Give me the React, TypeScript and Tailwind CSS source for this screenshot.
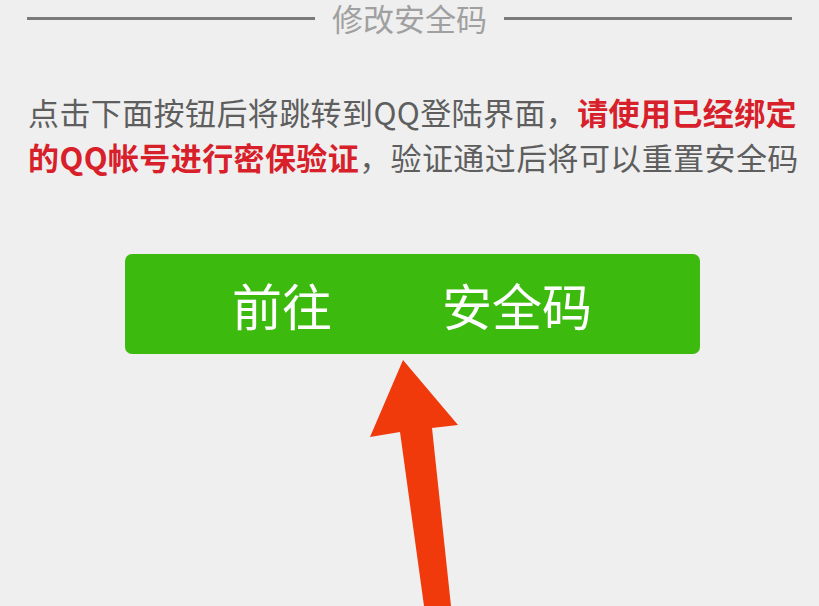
import React from "react";

const font = '"Noto Sans CJK SC", "Noto Sans", sans-serif';

export default function App() {
  return (
    <div
      className="relative w-[819px] h-[606px] overflow-hidden bg-[#efefef]"
      style={{ fontFamily: font }}
    >
      {/* Title row */}
      <div className="flex items-center px-[27px] h-[36px]">
        <div className="flex-1 h-[3px] bg-[#7a7a7a]" />
        <div className="px-[17px] text-[31px] leading-[36px] text-[#a0a0a0]">修改安全码</div>
        <div className="flex-1 h-[3px] bg-[#7a7a7a]" />
      </div>

      {/* Description */}
      <div className="mt-[53px] pl-[28px] pr-[20px] text-[31px] leading-[45px] text-[#5e5e5e] tracking-[0.4px] whitespace-nowrap">
        <div>
          点击下面按钮后将跳转到QQ登陆界面，
          <span className="font-bold text-[#d8202a]">请使用已经绑定</span>
        </div>
        <div>
          <span className="font-bold text-[#d8202a]">的QQ帐号进行密保验证</span>
          ，验证通过后将可以重置安全码
        </div>
      </div>

      {/* Button */}
      <div className="mt-[75px] flex justify-center">
        <div className="ml-[5px] w-[575px] h-[100px] rounded-[7px] bg-[#3dba0e] flex items-center justify-center gap-[110px] text-white text-[50px] leading-none">
          <span>前往</span>
          <span>安全码</span>
        </div>
      </div>

      {/* Arrow overlay */}
      <svg
        className="absolute left-0 top-0"
        width="819"
        height="606"
        viewBox="0 0 819 606"
      >
        <polygon
          points="403,360 458,425 432,428 451,606 424,606 400,432 370,437"
          fill="#f03a0c"
        />
      </svg>
    </div>
  );
}
